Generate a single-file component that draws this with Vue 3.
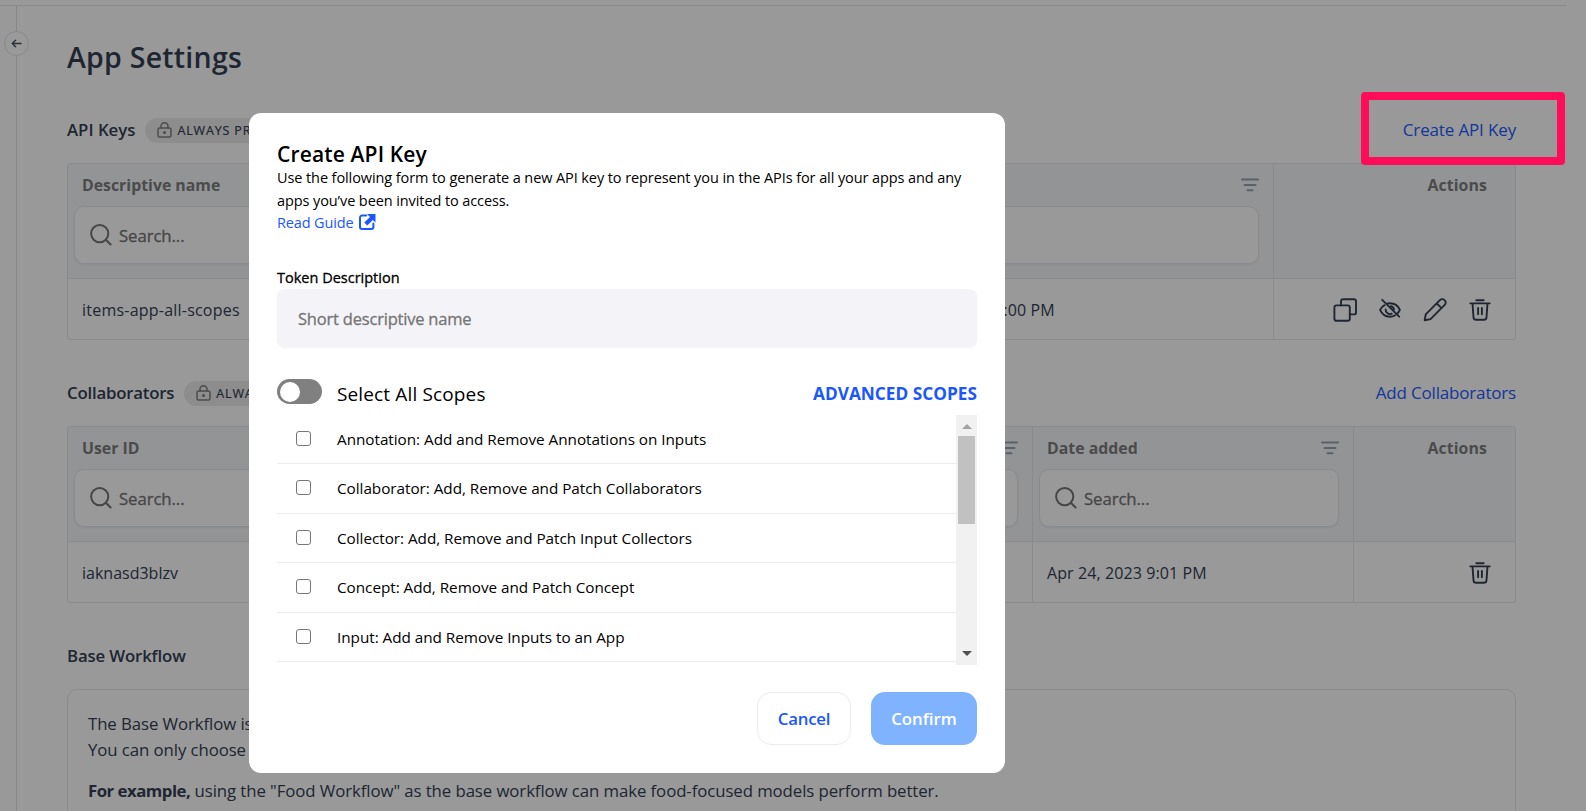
<script setup>
import { ref } from 'vue'

const sections = [
  {
    title: 'API Keys',
    titleClass: 't-keys',
    link: 'Create API Key',
    linkClass: 'l-create',
    grid: 'grid-keys',
    columns: ['Descriptive name', ''],
    cells: ['items-app-all-scopes', 'Apr 24, 2023 9:00 PM'],
    cellClasses: ['c-name', 'c-date'],
    actions: ['copy', 'eye-off', 'pencil', 'trash'],
  },
  {
    title: 'Collaborators',
    titleClass: 't-collab',
    link: 'Add Collaborators',
    linkClass: 'l-add',
    grid: 'grid-collab',
    columns: ['User ID', 'Date added'],
    cells: ['iaknasd3blzv', 'Apr 24, 2023 9:01 PM'],
    cellClasses: ['c-user', 'c-date'],
    actions: ['trash'],
  },
]

const scopes = ref([
  { label: 'Annotation: Add and Remove Annotations on Inputs', checked: false },
  { label: 'Collaborator: Add, Remove and Patch Collaborators', checked: false },
  { label: 'Collector: Add, Remove and Patch Input Collectors', checked: false },
  { label: 'Concept: Add, Remove and Patch Concept', checked: false },
  { label: 'Input: Add and Remove Inputs to an App', checked: false },
])
</script>

<template>
  <div class="page">
    <svg class="sprite" aria-hidden="true">
      <symbol id="i-copy" viewBox="0 0 24 24">
        <rect x="1.4" y="7.4" width="15.4" height="15.4" rx="2" />
        <path d="M8 7.4V3.2a2 2 0 0 1 2-2h11a2 2 0 0 1 2 2v11.200a2 2 0 0 1-2 2h-4.200" />
      </symbol>
      <symbol id="i-eye-off" viewBox="0 0 24 24">
        <path d="M6.600 7.200C4.300 8.400 2.800 10.300 2.100 11.900c1.700 4 5.500 6.800 9.900 6.800 2 0 3.700-.6 5.200-1.500" />
        <path d="M9.500 5.500c.8-.2 1.600-.3 2.500-.3 4.400 0 8.200 2.700 9.900 6.700-.6 1.400-1.500 2.700-2.700 3.800" />
        <path d="M7.600 11.500a4.400 4.400 0 0 0 6.200 4.200M12.800 8.200a4 4 0 0 1 3.200 3.400" />
        <path d="M4.200 1.800 21.200 18.700" />
      </symbol>
      <symbol id="i-pencil" viewBox="0 0 24 24">
        <path d="M1.700 22.200 2.700 16.300 16.900 2.100a3.200 3.200 0 0 1 4.600 0l.2.200a3.200 3.200 0 0 1 0 4.600L7.500 21.100ZM13.700 5.400l4.800 4.800" />
      </symbol>
      <symbol id="i-trash" viewBox="0 0 24 24">
        <path d="M2.300 5.400h19.400M8.300 2.300h7.400M4.500 5.400l1 14a2.600 2.600 0 0 0 2.600 2.400h7.800a2.600 2.600 0 0 0 2.600-2.400l1-14M10.100 10v6.200M13.900 10v6.200" />
      </symbol>
      <symbol id="i-lock" viewBox="0 0 15 16">
        <rect x="1" y="6" width="13" height="9" rx="1.500" />
        <path d="M4 6V4.300a3.500 3.500 0 0 1 7 0V6" />
        <circle cx="7.500" cy="10.500" r=".8" fill="currentColor" />
      </symbol>
      <symbol id="i-search" viewBox="0 0 22 22">
        <circle cx="9.700" cy="9.600" r="8.600" />
        <path d="M15.800 15.700 20.600 20.500" />
      </symbol>
      <symbol id="i-filter" viewBox="0 0 18 14">
        <path d="M1 1.500h16M3.500 7h11M6.500 12.300h5" />
      </symbol>
    </svg>

    <div class="topline"></div>
    <div class="shell">
      <aside class="rail">
        <button class="collapse" aria-label="Collapse">
          <svg viewBox="0 0 12 10"><path d="M11 5H1.500M5 1.300 1.300 5 5 8.700" /></svg>
        </button>
      </aside>

      <main class="content">
        <h1>App Settings</h1>

        <section v-for="s in sections" :key="s.title" class="section">
          <header class="section-head">
            <h2 :class="s.titleClass">{{ s.title }}</h2>
            <span class="badge">
              <svg class="lock"><use href="#i-lock" /></svg>
              <span>ALWAYS PRIVATE</span>
            </span>
            <a class="link" :class="s.linkClass">{{ s.link }}</a>
          </header>

          <div class="table" :class="s.grid">
            <div v-for="(c, i) in s.columns" :key="'h' + i" class="th">
              <div class="th-label">
                <span>{{ c }}</span>
                <svg class="filter"><use href="#i-filter" /></svg>
              </div>
              <div class="search">
                <svg class="search-icon"><use href="#i-search" /></svg>
                <span>Search...</span>
              </div>
            </div>
            <div class="th th-actions"><span>Actions</span></div>

            <div v-for="(c, i) in s.cells" :key="'c' + i" class="td">
              <span :class="s.cellClasses[i]">{{ c }}</span>
            </div>
            <div class="td td-actions">
              <svg v-for="a in s.actions" :key="a" class="action"><use :href="'#i-' + a" /></svg>
            </div>
          </div>
        </section>

        <section class="section">
          <header class="section-head"><h2 class="t-base">Base Workflow</h2></header>
          <div class="workflow">
            <p>The Base Workflow is the default<br />You can only choose one</p>
            <p class="example"><b>For example,</b> using the "Food Workflow" as the base workflow can make food-focused models perform better.</p>
          </div>
        </section>
      </main>
    </div>

    <div class="overlay">
      <div class="modal" role="dialog">
        <h3>Create API Key</h3>
        <p class="desc">
          <span>Use the following form to generate a new API key to represent you in the APIs for all your apps and any</span>
          <span>apps you’ve been invited to access.</span>
        </p>
        <a class="guide">
          <span>Read Guide</span>
          <svg viewBox="0 0 17 16">
            <path d="M7.200 1.500H3.200A2.200 2.200 0 0 0 1 3.700v9a2.200 2.200 0 0 0 2.200 2.200h9a2.200 2.200 0 0 0 2.200-2.200V9.500" fill="none" stroke="currentColor" stroke-width="2" />
            <path d="M8 0h8.500v8.500l-2.600-2.600-5.700 5.600-2.900-2.900 5.700-5.600Z" fill="currentColor" />
          </svg>
        </a>

        <label class="token-label">Token Description</label>
        <div class="token-input"><span>Short descriptive name</span></div>

        <div class="select-all">
          <span class="toggle"><i></i></span>
          <span class="select-label">Select All Scopes</span>
          <a class="advanced">ADVANCED SCOPES</a>
        </div>

        <div class="scope-box">
          <ul class="scopes">
            <li v-for="(s, i) in scopes" :key="i">
              <span class="check"></span>
              <span>{{ s.label }}</span>
            </li>
          </ul>
          <div class="scrollbar">
            <i class="up"></i>
            <i class="thumb"></i>
            <i class="down"></i>
          </div>
        </div>

        <footer class="buttons">
          <button class="cancel">Cancel</button>
          <button class="confirm">Confirm</button>
        </footer>
      </div>
    </div>

    <div class="highlight"></div>
  </div>
</template>

<style>
body {
  margin: 0;
  background: #fff;
  overflow: hidden;
}
</style>

<style scoped>
* {
  box-sizing: border-box;
}
.page {
  position: relative;
  height: 811px;
  overflow: hidden;
  font-family: 'Open Sans', 'Noto Sans', sans-serif;
  color: #344054;
  white-space: nowrap;
}
.sprite {
  position: absolute;
  width: 0;
  height: 0;
}
svg {
  display: block;
  flex: none;
  fill: none;
  stroke: currentColor;
  stroke-linecap: round;
  stroke-linejoin: round;
}
h1,
h2,
h3,
p,
ul {
  margin: 0;
  padding: 0;
}
.topline {
  height: 6px;
  width: 1566px;
  border-bottom: 1px solid #e5e7eb;
}
.shell {
  display: flex;
  height: 805px;
}
.rail {
  width: 17px;
  flex: none;
  border-right: 1px solid #dfe1ea;
  padding: 25px 0 0 4px;
}
.collapse {
  display: flex;
  align-items: center;
  justify-content: center;
  position: relative;
  width: 25px;
  height: 25px;
  padding: 0 1px 0 0;
  border: 1px solid #e2e4ec;
  border-radius: 50%;
  background: #fff;
  color: #475467;
}
.collapse svg {
  width: 11px;
  height: 9px;
  stroke-width: 1.600;
}
.content {
  width: 1499px;
  padding: 31px 0 0 50px;
}
h1 {
  font-size: 28.500px;
  line-height: 40px;
  font-weight: 600;
  letter-spacing: 0.25px;
}
.section {
  margin-top: 40px;
}
.section-head {
  display: flex;
  align-items: center;
  height: 26px;
  margin-bottom: 20px;
}
h2 {
  font-size: 16.800px;
  line-height: 26px;
  font-weight: 600;
}
.t-collab {
  letter-spacing: -0.2px;
}
.t-base {
  letter-spacing: -0.15px;
}
.badge {
  display: flex;
  align-items: center;
  gap: 5.500px;
  height: 25px;
  margin-left: 10px;
  padding: 0 12px 0 11.500px;
  border-radius: 13px;
  background: #ececec;
  font-size: 12.500px;
  letter-spacing: 0.85px;
  -webkit-text-stroke: 0.2px currentColor;
}
.lock {
  width: 15px;
  height: 16px;
  color: #808080;
  stroke-width: 1.500;
}
.link {
  position: relative;
  margin: -2px 0 0 auto;
  font-size: 17px;
  color: #1f5aff;
}
.l-create {
  letter-spacing: -0.15px;
}
.l-add {
  letter-spacing: -0.18px;
}
.table {
  display: grid;
  grid-template-rows: 115px 60px;
  border: 1px solid #e5e7eb;
  border-radius: 3px;
  overflow: hidden;
}
.grid-keys {
  grid-template-columns: 813px 393px 241px;
}
.grid-collab {
  grid-template-columns: 965px 321px 161px;
}
.th {
  background: #f3f7fa;
  border-right: 1px solid #e5e7eb;
  border-bottom: 1px solid #e5e7eb;
  padding: 9px 14px 0 6px;
  font-size: 15.850px;
  font-weight: 700;
  color: #7d7d7d;
}
.th-label {
  display: flex;
  align-items: center;
  justify-content: space-between;
  height: 24px;
  padding-left: 8px;
}
.filter {
  width: 18px;
  height: 14px;
  margin-right: 0.5px;
  color: #98a2b3;
  stroke-width: 2;
}
.search {
  display: flex;
  align-items: center;
  gap: 7px;
  height: 58px;
  margin-top: 9px;
  padding: 0 15px;
  border: 1px solid #e5e7eb;
  border-radius: 10px;
  background: #fff;
  box-shadow: 0 1px 2px rgba(16, 24, 40, 0.05);
  color: #757575;
  font-size: 16.800px;
  font-weight: 400;
  letter-spacing: -0.1px;
  -webkit-text-stroke: 0.3px currentColor;
}
.search-icon {
  width: 22px;
  height: 22px;
  stroke-width: 2;
}
.th-actions,
.td-actions {
  border-right: 0;
}
.th-actions {
  display: flex;
  justify-content: flex-end;
  padding: 9px 28px 0 0;
  line-height: 24px;
  letter-spacing: 0.1px;
}
.td {
  display: flex;
  align-items: center;
  border-right: 1px solid #e5e7eb;
  padding: 1px 14px 0;
  font-size: 16px;
}
.c-name {
  letter-spacing: 0.22px;
}
.c-date {
  letter-spacing: 0.1px;
}
.td.td-actions {
  justify-content: flex-end;
  gap: 21px;
  border-right: 0;
  padding-right: 23.500px;
}
.action {
  width: 24px;
  height: 24px;
  stroke-width: 1.900;
}
.workflow {
  height: 200px;
  border: 1px solid #e5e7eb;
  border-radius: 10px;
  padding: 21px 20px;
  font-size: 16.800px;
  line-height: 26px;
  letter-spacing: -0.08px;
}
.example {
  margin-top: 15px;
}
.example b {
  font-weight: 700;
  letter-spacing: -0.5px;
}
.overlay {
  position: absolute;
  inset: 0;
  padding: 113px 0 0 249px;
  background: rgba(0, 0, 0, 0.4);
}
.modal {
  width: 756px;
  height: 660px;
  padding: 28px 28px 28px;
  border-radius: 12px;
  background: #fff;
  color: #000;
}
h3 {
  font-size: 21px;
  line-height: 27px;
  font-weight: 600;
  letter-spacing: 0.15px;
}
.desc {
  display: flex;
  flex-direction: column;
  align-items: flex-start;
  margin-top: -2px;
  font-size: 14.500px;
  line-height: 23px;
  letter-spacing: -0.092px;
}
.guide {
  display: flex;
  align-items: center;
  gap: 6px;
  height: 22px;
  margin-top: -1px;
  font-size: 14.500px;
  letter-spacing: -0.15px;
  color: #1b57ff;
}
.guide svg {
  width: 17px;
  height: 16px;
  stroke: none;
}
.token-label {
  display: block;
  margin-top: 34px;
  font-size: 14.500px;
  line-height: 22px;
  -webkit-text-stroke: 0.3px currentColor;
}
.token-input {
  display: flex;
  align-items: center;
  height: 58px;
  padding-left: 21px;
  border-radius: 8px;
  background: #f3f3f8;
  box-shadow: 0 1px 2px rgba(16, 24, 40, 0.05);
  font-size: 16.500px;
  letter-spacing: -0.2px;
  color: #757575;
  -webkit-text-stroke: 0.3px currentColor;
}
.select-all {
  display: flex;
  align-items: center;
  height: 30px;
  margin-top: 32px;
}
.toggle {
  width: 45px;
  height: 25px;
  margin: -5px 15px 0 0;
  padding: 3px;
  border-radius: 13px;
  background: #808080;
}
.toggle i {
  display: block;
  width: 20px;
  height: 20px;
  border-radius: 50%;
  background: #fff;
}
.select-label {
  font-size: 19px;
  letter-spacing: 0.14px;
}
.advanced {
  margin: -2px 0 0 auto;
  font-size: 17.250px;
  font-weight: 700;
  color: #1b57ff;
}
.scope-box {
  display: flex;
  height: 250px;
  margin-top: 6px;
}
.scopes {
  flex: 1;
  list-style: none;
  margin-top: -0.2px;
}
.scopes li {
  display: flex;
  align-items: center;
  height: 49.500px;
  padding: 0 0 0.5px 19px;
  border-bottom: 1px solid #ececec;
  font-size: 15.300px;
  letter-spacing: -0.04px;
}
.check {
  width: 15px;
  height: 15px;
  margin: -1px 26px 0 0;
  border: 1px solid #767676;
  border-radius: 3px;
}
.scrollbar {
  display: flex;
  flex-direction: column;
  align-items: center;
  width: 21px;
  background: #f1f1f1;
}
.up {
  margin-top: 9px;
  border: 5px solid transparent;
  border-top: 0;
  border-bottom-color: #a3a3a3;
}
.thumb {
  width: 17px;
  height: 88px;
  margin-top: 7px;
  background: #c1c1c1;
}
.down {
  margin: auto 0 9px;
  border: 5px solid transparent;
  border-bottom: 0;
  border-top-color: #505050;
}
.buttons {
  display: flex;
  justify-content: flex-end;
  gap: 20px;
  margin-top: 27px;
}
.buttons button {
  height: 53px;
  padding: 0;
  border-radius: 14px;
  font: 600 16.800px 'Open Sans', sans-serif;
}
.buttons .cancel {
  width: 94px;
  border: 1px solid #ececec;
  background: #fff;
  color: #1b57ff;
  letter-spacing: -0.2px;
}
.confirm {
  width: 106px;
  border: 0;
  background: #80b3ff;
  color: #fff;
}
.highlight {
  position: absolute;
  left: 1361px;
  top: 92px;
  width: 204px;
  height: 73px;
  border: 8px solid #ff0d5b;
  border-radius: 4px;
}
</style>
